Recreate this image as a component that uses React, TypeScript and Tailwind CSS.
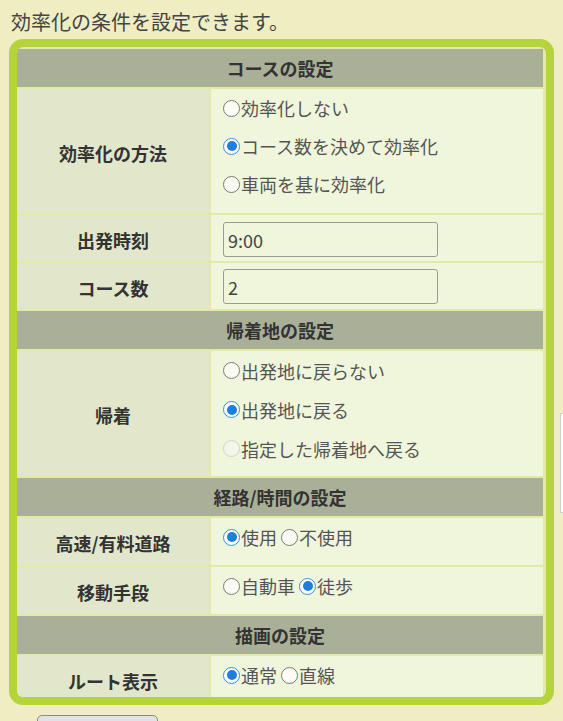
import type { ReactNode } from "react";

type Opt = { label: string; checked?: boolean; disabled?: boolean };

function Radio({ checked, disabled }: { checked?: boolean; disabled?: boolean }) {
  if (checked) {
    return (
      <span className="mr-[1px] flex h-[17px] w-[17px] shrink-0 items-center justify-center rounded-full border-[1.5px] border-[#3a8ce3] bg-white">
        <span className="h-[10px] w-[10px] rounded-full bg-[#1f7ddf]" />
      </span>
    );
  }
  return (
    <span
      className={
        disabled
          ? "mr-[1px] h-[17px] w-[17px] shrink-0 rounded-full border border-[#cfd2c4] bg-[#f4f6ea]"
          : "mr-[1px] h-[17px] w-[17px] shrink-0 rounded-full border border-[#7a7a72] bg-[#fbfcf3]"
      }
    />
  );
}

function Choice({ opt }: { opt: Opt }) {
  return (
    <span className="inline-flex items-center">
      <Radio checked={opt.checked} disabled={opt.disabled} />
      <span>{opt.label}</span>
    </span>
  );
}

function SectionHead({ title }: { title: string }) {
  return (
    <div className="flex h-[38px] items-center justify-center bg-[#aab097] text-[18px] font-bold leading-none text-[#333]">
      {title}
    </div>
  );
}

function Row({ label, height, children }: { label: string; height: string; children: ReactNode }) {
  return (
    <div className={`flex gap-[2px] ${height}`}>
      <div className="flex w-[192px] shrink-0 items-center justify-center bg-[#e2e7cc] pt-[3px] text-[18px] font-bold leading-none text-[#333]">
        {label}
      </div>
      <div className="flex-1 bg-[#f0f6db] pl-[12px] text-[18px] text-[#555]">{children}</div>
    </div>
  );
}

// stacked options, one per line
function Stack({ opts, line }: { opts: Opt[]; line: string }) {
  return (
    <div className="flex flex-col">
      {opts.map((o) => (
        <div key={o.label} className={`flex items-center leading-none ${line}`}>
          <Choice opt={o} />
        </div>
      ))}
    </div>
  );
}

// options on one line
function Inline({ opts }: { opts: Opt[] }) {
  return (
    <div className="flex h-[38px] items-center gap-[4px] leading-none">
      {opts.map((o) => (
        <Choice key={o.label} opt={o} />
      ))}
    </div>
  );
}

function TextBox({ value }: { value: string }) {
  return (
    <input
      type="text"
      defaultValue={value}
      className="h-[35px] w-[215px] rounded-[3px] border border-[#9a9c8c] bg-[#f0f6db] px-[4px] text-[18px] text-[#444] outline-none"
    />
  );
}

export default function App() {
  return (
    <div className="relative h-[721px] overflow-hidden bg-[#f0edc2] [font-family:'Noto_Sans_CJK_JP',sans-serif]">
      <p className="pl-[11px] pt-[8px] text-[20px] leading-[28px] text-[#444]">効率化の条件を設定できます。</p>

      <div className="mt-[3px] ml-[9px] h-[666px] w-[545px] overflow-hidden rounded-[14px] border-[8px] border-[#b5d33b] bg-[#e4e9a6]">
        <div className="flex flex-col gap-[2px] pt-[2px] pr-[3px]">
          <SectionHead title="コースの設定" />
          <Row label="効率化の方法" height="h-[124px]">
            <Stack
              line="h-[38px]"
              opts={[
                { label: "効率化しない" },
                { label: "コース数を決めて効率化", checked: true },
                { label: "車両を基に効率化" },
              ]}
            />
          </Row>
          <Row label="出発時刻" height="h-[46px]">
            <div className="pt-[7px]">
              <TextBox value="9:00" />
            </div>
          </Row>
          <Row label="コース数" height="h-[46px]">
            <div className="pt-[6px]">
              <TextBox value="2" />
            </div>
          </Row>

          <SectionHead title="帰着地の設定" />
          <Row label="帰着" height="h-[125px]">
            <Stack
              line="h-[39px]"
              opts={[
                { label: "出発地に戻らない" },
                { label: "出発地に戻る", checked: true },
                { label: "指定した帰着地へ戻る", disabled: true },
              ]}
            />
          </Row>

          <SectionHead title="経路/時間の設定" />
          <Row label="高速/有料道路" height="h-[47px]">
            <Inline opts={[{ label: "使用", checked: true }, { label: "不使用" }]} />
          </Row>
          <Row label="移動手段" height="h-[47px]">
            <Inline opts={[{ label: "自動車" }, { label: "徒歩", checked: true }]} />
          </Row>

          <SectionHead title="描画の設定" />
          <Row label="ルート表示" height="h-[47px]">
            <Inline opts={[{ label: "通常", checked: true }, { label: "直線" }]} />
          </Row>
        </div>
      </div>

      <button
        type="button"
        className="mt-[10px] ml-[37px] h-[30px] w-[121px] rounded-[5px] border border-[#8a8a8a] bg-[#e2e2e2]"
      />

      {/* panel edge peeking in from the right */}
      <div className="absolute top-[413px] left-[560px] h-[100px] w-[20px] border border-[#cfcfcf] bg-white" />
    </div>
  );
}
